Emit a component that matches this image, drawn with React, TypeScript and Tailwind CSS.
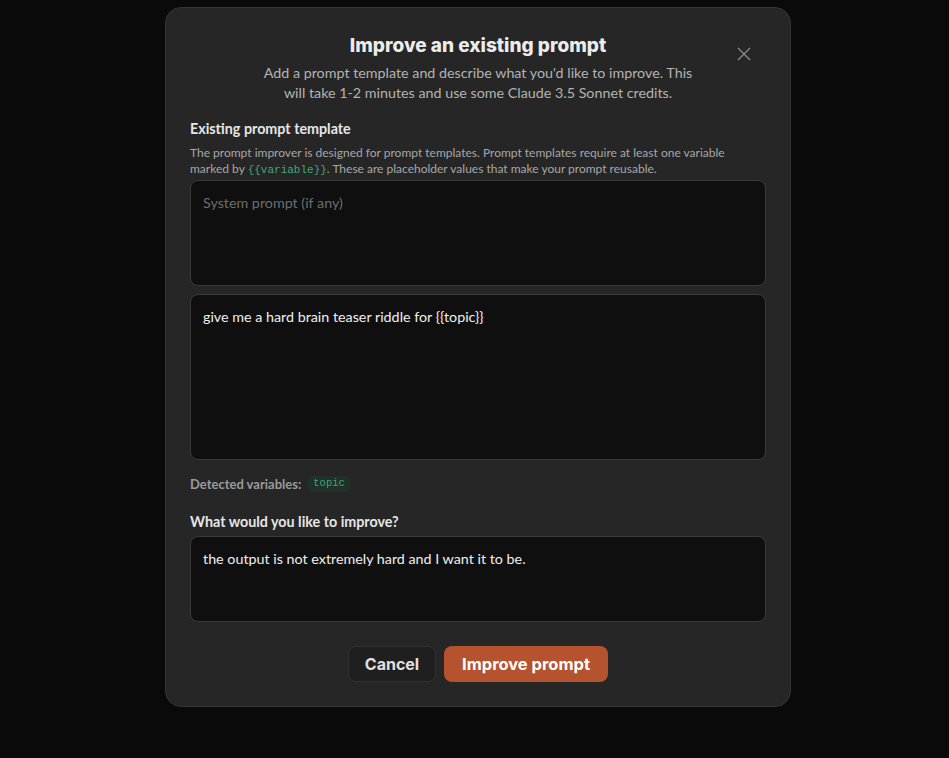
import React from "react";

export default function App() {
  const body = { fontFamily: 'Lato, "Noto Sans", sans-serif' } as React.CSSProperties;
  const head = { fontFamily: 'Inter, "Noto Sans", sans-serif' } as React.CSSProperties;
  return (
    <div className="w-[949px] h-[758px] bg-[#0a0a0a] flex justify-start pl-[165px] pt-[7px]" style={body}>
      <div className="relative w-[626px] h-[700px] rounded-[16px] bg-[#262626] border border-[#353535] px-[24px] pt-[26px] flex flex-col">
        <button className="absolute right-[38px] top-[38px] text-[#8a8a8a]">
          <svg width="16" height="16" viewBox="0 0 16 16" fill="none" stroke="currentColor" strokeWidth="1.4">
            <path d="M2 2L14 14M14 2L2 14" />
          </svg>
        </button>
        <h2 className="text-center text-[19px] leading-[24px] font-extrabold text-[#ececec]" style={head}>
          Improve an existing prompt
        </h2>
        <p className="mt-[5px] mx-auto max-w-[440px] text-center text-[14.3px] leading-[20px] text-[#b3b3b3]">
          Add a prompt template and describe what you'd like to improve. This will take 1-2 minutes and use some Claude 3.5 Sonnet credits.
        </p>
        <div className="mt-[16px] text-[14.3px] leading-[20px] font-bold text-[#e6e6e6]">Existing prompt template</div>
        <p className="mt-[6px] text-[12px] leading-[16px] text-[#a6a6a6]">
          The prompt improver is designed for prompt templates. Prompt templates require at least one variable marked by{" "}
          <span className="text-[#3fa77a] font-mono text-[11px] leading-[16px]">{"{{variable}}"}</span>. These are placeholder values that make your prompt reusable.
        </p>
        <div className="mt-[2px] h-[106px] rounded-[8px] bg-[#0f0f0f] border border-[#3a3a3a] px-[12px] pt-[12px] text-[14.3px] leading-[20px] text-[#6e6e6e]">
          System prompt (if any)
        </div>
        <div className="mt-[8px] h-[166px] rounded-[8px] bg-[#0f0f0f] border border-[#3a3a3a] px-[12px] pt-[12px] text-[14.3px] leading-[20px] text-[#f0f0f0]">
          {"give me a hard brain teaser riddle for {{topic}}"}
        </div>
        <div className="mt-[16px] flex items-center gap-[7px]">
          <span className="text-[13px] leading-[16px] font-bold text-[#9a9a9a]">Detected variables:</span>
          <span className="rounded-[4px] bg-[#1f3128] px-[5px] h-[16px] flex items-center text-[10.5px] font-mono text-[#3fa77a]">topic</span>
        </div>
        <div className="mt-[20px] text-[14.3px] leading-[20px] font-bold text-[#e6e6e6]">What would you like to improve?</div>
        <div className="mt-[4px] h-[86px] rounded-[8px] bg-[#0f0f0f] border border-[#3a3a3a] px-[12px] pt-[12px] text-[14.3px] leading-[20px] text-[#f0f0f0]">
          the output is not extremely hard and I want it to be.
        </div>
        <div className="mt-[24px] flex justify-center gap-[8px]">
          <button className="h-[36px] w-[88px] rounded-[8px] bg-[#1f1f1f] border border-[#303030] text-[16px] font-bold text-[#e0e0e0]" style={head}>
            Cancel
          </button>
          <button className="h-[36px] w-[164px] rounded-[8px] bg-[#b5532e] text-[16.5px] font-bold text-white" style={head}>
            Improve prompt
          </button>
        </div>
      </div>
    </div>
  );
}
